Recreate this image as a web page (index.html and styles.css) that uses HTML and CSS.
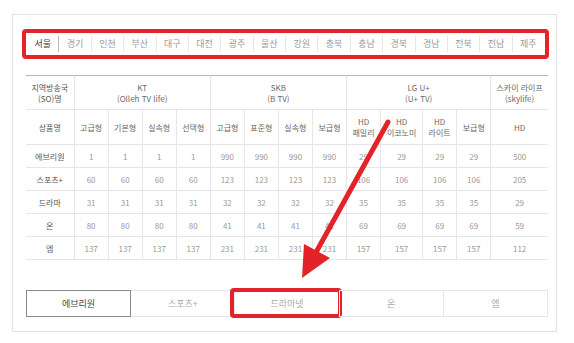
FILE: index.html
```html
<!DOCTYPE html>
<html lang="ko">
<head>
<meta charset="utf-8">
<link rel="stylesheet" href="styles.css">
</head>
<body>
<div class="card">
  <div class="region-box">
    <ul class="regions">
      <li class="on">서울</li><li>경기</li><li>인천</li><li>부산</li><li>대구</li><li>대전</li><li>광주</li><li>울산</li><li>강원</li><li>충북</li><li>충남</li><li>경북</li><li>경남</li><li>전북</li><li>전남</li><li>제주</li>
    </ul>
  </div>
  <table class="grid">
    <colgroup>
      <col class="c-first"><col class="c"><col class="c"><col class="c"><col class="c"><col class="c"><col class="c"><col class="c"><col class="c"><col class="c"><col class="c-wide"><col class="c"><col class="c"><col class="c-sky">
    </colgroup>
    <tr class="h1">
      <th class="lbl">지역방송국<br>(SO)명</th>
      <th colspan="4">KT<br>(Olleh TV life)</th>
      <th colspan="4">SKB<br>(B TV)</th>
      <th colspan="4">LG U+<br>(U+ TV)</th>
      <th>스카이 라이프<br>(skylife)</th>
    </tr>
    <tr class="h2">
      <th class="lbl">상품명</th>
      <th>고급형</th><th>기본형</th><th>실속형</th><th>선택형</th>
      <th>고급형</th><th>표준형</th><th>실속형</th><th>보급형</th>
      <th>HD<br>패밀리</th><th>HD<br>이코노미</th><th>HD<br>라이트</th><th>보급형</th>
      <th>HD</th>
    </tr>
    <tr><th class="lbl">에브리원</th><td>1</td><td>1</td><td>1</td><td>1</td><td>990</td><td>990</td><td>990</td><td>990</td><td>29</td><td>29</td><td>29</td><td>29</td><td>500</td></tr>
    <tr><th class="lbl">스포츠+</th><td>60</td><td>60</td><td>60</td><td>60</td><td>123</td><td>123</td><td>123</td><td>123</td><td>106</td><td>106</td><td>106</td><td>106</td><td>205</td></tr>
    <tr><th class="lbl">드라마</th><td>31</td><td>31</td><td>31</td><td>31</td><td>32</td><td>32</td><td>32</td><td>32</td><td>35</td><td>35</td><td>35</td><td>35</td><td>29</td></tr>
    <tr><th class="lbl">온</th><td>80</td><td>80</td><td>80</td><td>80</td><td>41</td><td>41</td><td>41</td><td>41</td><td>69</td><td>69</td><td>69</td><td>69</td><td>59</td></tr>
    <tr><th class="lbl">엠</th><td>137</td><td>137</td><td>137</td><td>137</td><td>231</td><td>231</td><td>231</td><td>231</td><td>157</td><td>157</td><td>157</td><td>157</td><td>112</td></tr>
  </table>
  <ul class="channels">
    <li class="on">에브리원</li>
    <li>스포츠+</li>
    <li class="marked">드라마넷<span class="mark"></span></li>
    <li>온</li>
    <li>엠</li>
  </ul>
</div>
<svg class="arrow" width="574" height="343" viewBox="0 0 574 343">
  <line x1="388" y1="122" x2="314" y2="256" stroke="#e3222a" stroke-width="5" stroke-linecap="round"/>
  <polygon points="302,278 304,244 330,258" fill="#e3222a"/>
</svg>
</body>
</html>
```
FILE: styles.css
```css
html, body {
  margin: 0;
  padding: 0;
  background: #fff;
}
body {
  font-family: "Noto Sans CJK KR", "Noto Sans", sans-serif;
  width: 574px;
  height: 343px;
  overflow: hidden;
  position: relative;
}
.card {
  position: relative;
  margin: 14px 0 0 12px;
  width: 545px;
  height: 318px;
  box-sizing: border-box;
  border: 1px solid #e2e2e2;
  background: #fff;
  padding: 14px 0 0 9px;
}
.card::before {
  content: "";
  position: absolute;
  left: -1px;
  top: -1px;
  width: 110px;
  height: 60px;
  z-index: -1;
  box-shadow: -4px -5px 8px rgba(0, 0, 0, 0.4);
  transform: skew(-5deg, -4deg);
  transform-origin: 0 0;
}
.card::after {
  content: "";
  position: absolute;
  right: 0;
  bottom: 0;
  width: 220px;
  height: 80px;
  z-index: -1;
  box-shadow: 4px 6px 7px rgba(0, 0, 0, 0.3);
  transform: skew(-3deg, -2deg);
  transform-origin: 100% 100%;
}
.region-box {
  width: 527px;
  height: 30px;
  box-sizing: border-box;
  border: 4px solid #e3222a;
  border-radius: 4px;
  padding: 0 1px 0 1px;
}
.regions {
  list-style: none;
  margin: 0;
  padding: 0;
  display: flex;
  height: 22px;
  align-items: center;
}
.regions li {
  flex: 1;
  text-align: center;
  font-size: 9px;
  line-height: 16px;
  color: #9a9a9a;
  border-left: 1px solid #e6e6e6;
}
.regions li:first-child {
  border-left: none;
}
.regions li.on {
  color: #444;
  border-right: 1px solid #bbb;
}
.regions li.on + li {
  border-left: none;
}
.grid {
  margin: 16px 0 0 4px;
  width: 522px;
  border-collapse: collapse;
  table-layout: fixed;
  border-top: 1px solid #b5b5b5;
}
.c-first { width: 48px; }
.c { width: 34px; }
.c-wide { width: 42px; }
.c-sky { width: 57px; }
.grid th, .grid td {
  padding: 0;
  text-align: center;
  font-size: 8px;
  font-weight: normal;
  line-height: 11px;
  border: 1px solid #e6e6e6;
  border-top: none;
  color: #999;
}
.grid th {
  color: #6a6a6a;
}
.grid tr > :first-child { border-left: none; }
.grid tr > :last-child { border-right: none; }
.grid .h1 th { height: 33px; }
.grid .h2 th { height: 34px; }
.grid td, .grid .lbl { height: 22px; }
.grid .h1 th.lbl { height: 33px; }
.grid .h2 th.lbl { height: 34px; }
.grid th.lbl { color: #555; }
.channels {
  list-style: none;
  margin: 30px 0 0 4px;
  padding: 0;
  width: 522px;
  display: flex;
}
.channels li {
  position: relative;
  flex: 1;
  height: 27px;
  box-sizing: border-box;
  border: 1px solid #e6e6e6;
  margin-left: -1px;
  text-align: center;
  font-size: 9px;
  line-height: 25px;
  color: #aaa;
}
.channels li:first-child { margin-left: 0; }
.channels li.on {
  border-color: #8a8a8a;
  color: #444;
  z-index: 1;
}
.mark {
  position: absolute;
  left: -5px;
  right: -3px;
  top: -3px;
  bottom: -2px;
  border: 4px solid #e3222a;
  border-radius: 4px;
}
.arrow {
  position: absolute;
  left: 0;
  top: 0;
  pointer-events: none;
}
```
